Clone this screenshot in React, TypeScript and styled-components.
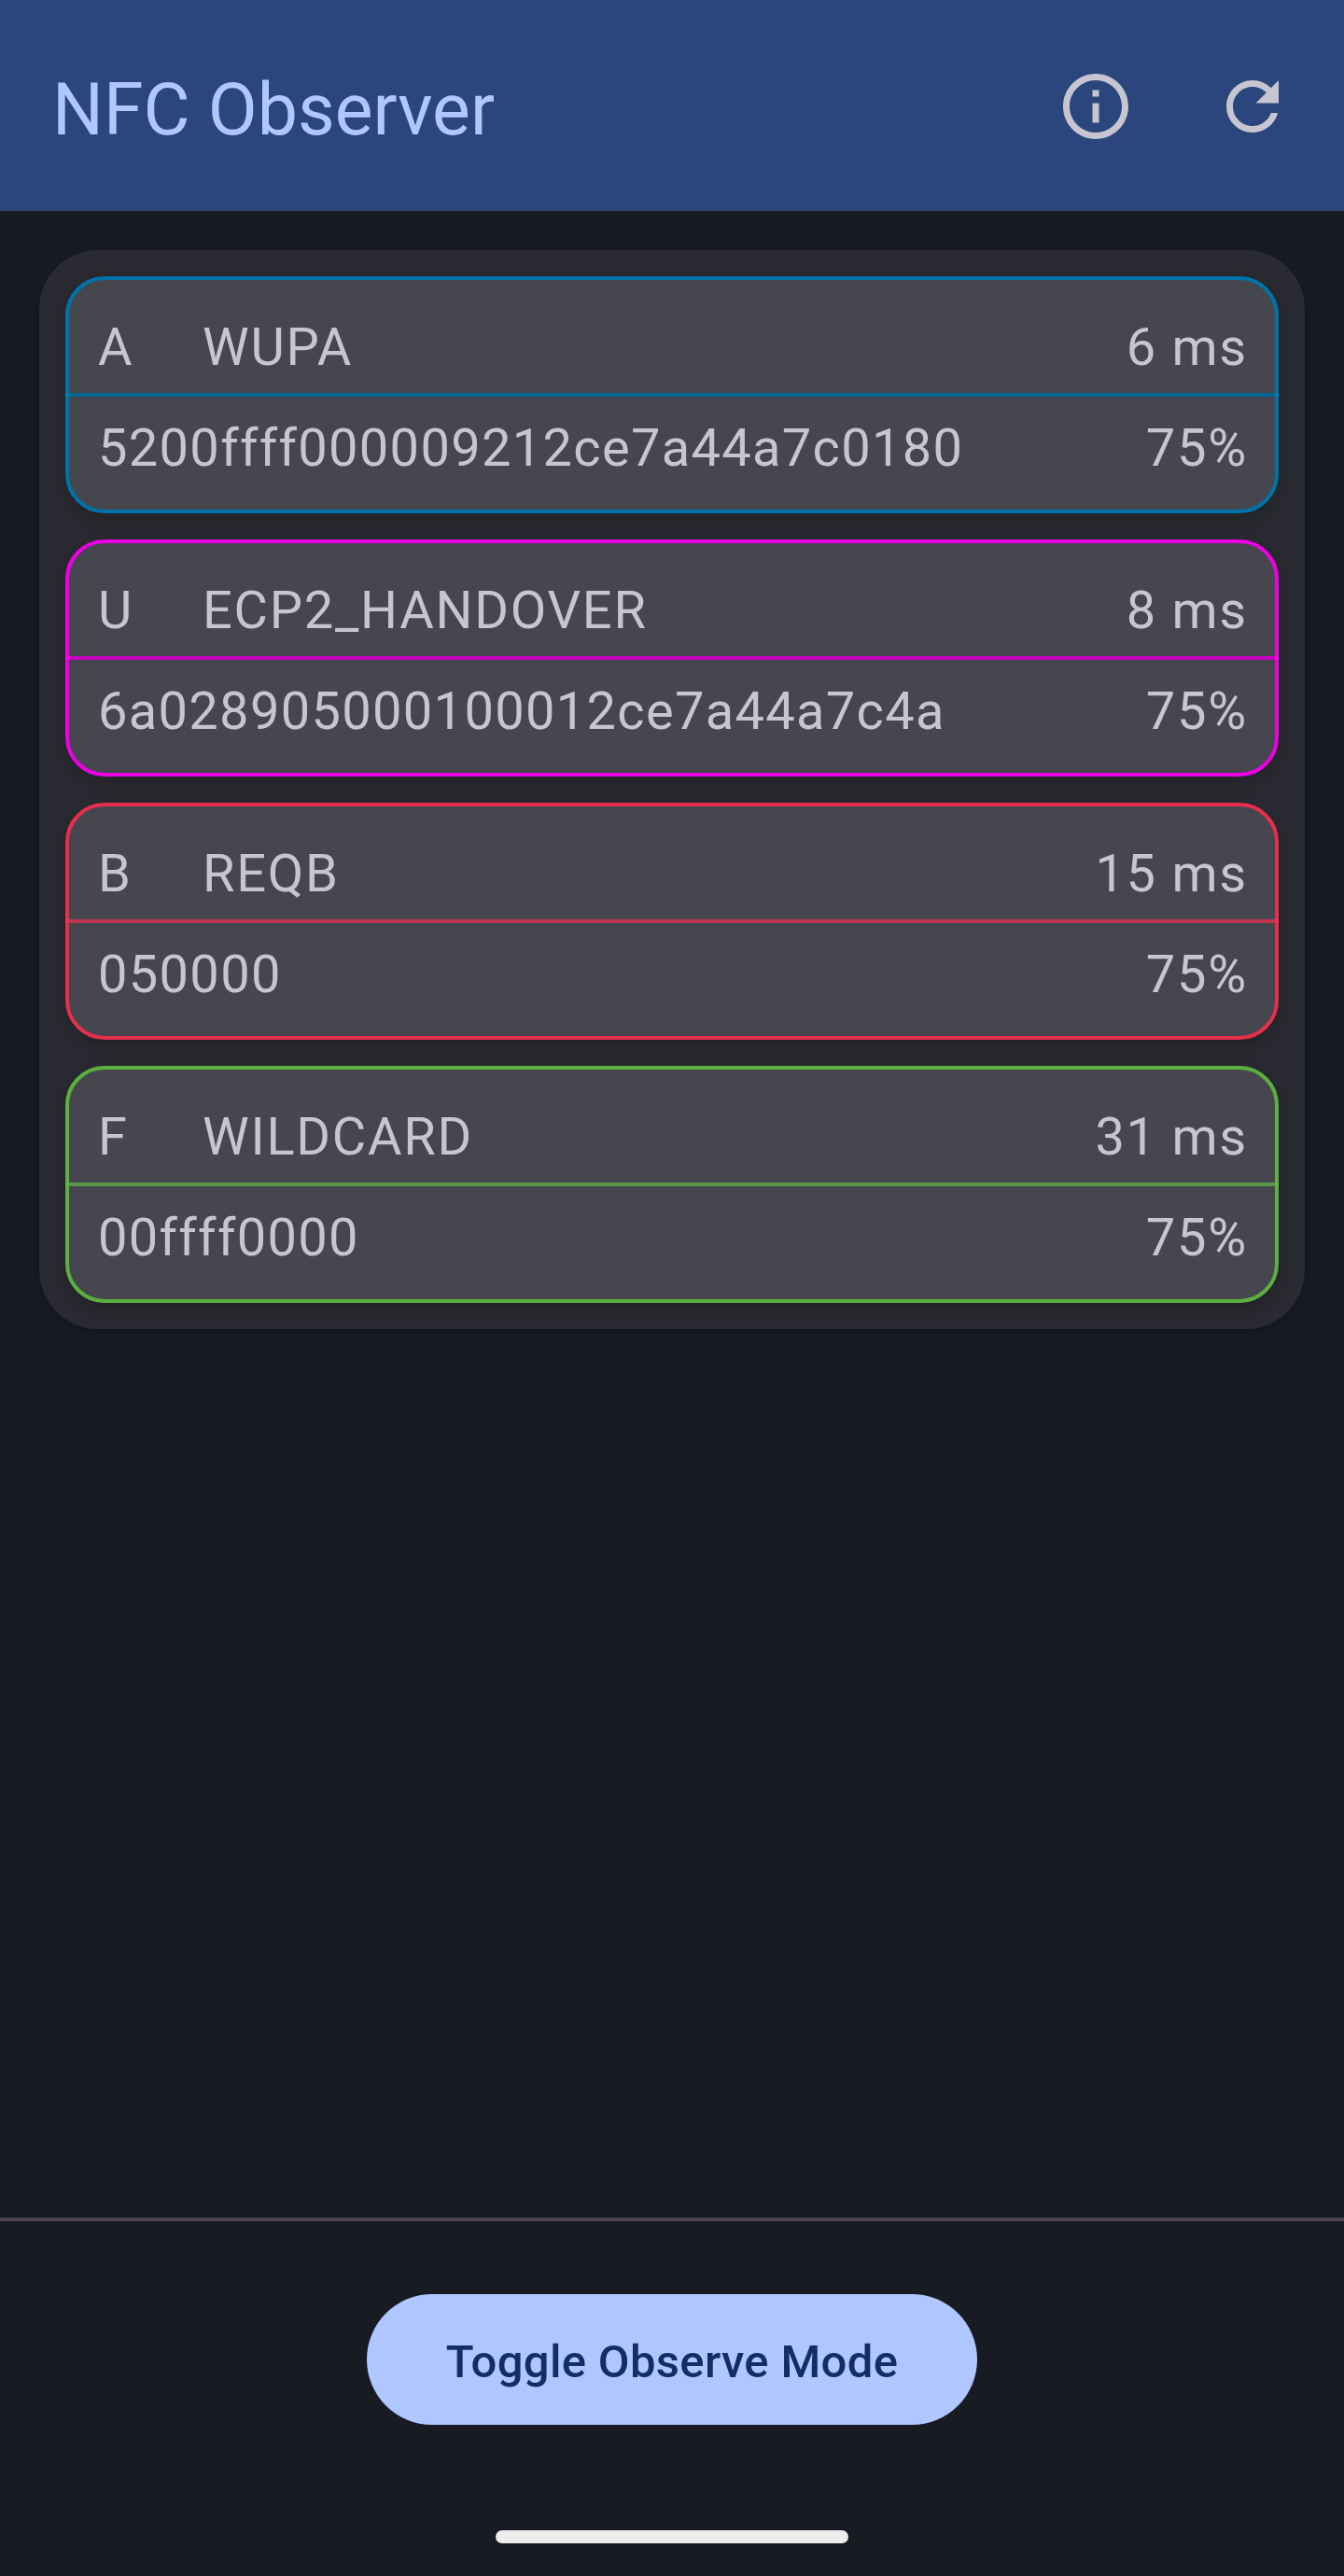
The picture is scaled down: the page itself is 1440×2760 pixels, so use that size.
import React from "react";
import styled, { createGlobalStyle } from "styled-components";

const GlobalStyle = createGlobalStyle`
  * { box-sizing: border-box; }
  body { margin: 0; background: #191b23; font-family: Roboto, "Noto Sans", sans-serif; }
`;

const Screen = styled.div`
  display: flex;
  flex-direction: column;
  height: 2760px;
  background: #191b23;
`;

const TopBar = styled.header`
  display: flex;
  align-items: center;
  justify-content: space-between;
  height: 226px;
  padding: 2px 14px 0 56px;
  background: #2b467c;
`;

const Title = styled.h1`
  margin: 8px 0 0;
  color: #b0c6ff;
  font-size: 77px;
  font-weight: 400;
  line-height: 98px;
`;

const Actions = styled.div`
  display: flex;
`;

const IconButton = styled.button`
  width: 168px;
  height: 168px;
  padding: 42px;
  border: 0;
  background: none;
  color: #c6c5d0;
  svg { display: block; width: 84px; height: 84px; fill: currentColor; }
`;

const Content = styled.main`
  flex: 1;
  padding: 42px;
`;

const Panel = styled.section`
  display: flex;
  flex-direction: column;
  gap: 28px;
  padding: 28px;
  border-radius: 63px;
  background: #2a2a32;
  box-shadow: 0 4px 10px rgba(0, 0, 0, 0.22);
`;

const Card = styled.article<{ $color: string }>`
  height: 254px;
  border: 4px solid ${(p) => p.$color};
  border-radius: 42px;
  background: #46464f;
  box-shadow: 0 6px 20px rgba(0, 0, 0, 0.22);
`;

const Row = styled.div`
  display: flex;
  height: 121px;
  padding: 30px 29px 0 31px;
  color: #c6c5d0;
  font-size: 56px;
  line-height: 84px;
  letter-spacing: 1.75px;
  white-space: nowrap;
`;

const DataRow = styled(Row)`
  padding-top: 13px;
`;

const Kind = styled.span`
  width: 112px;
`;

const Label = styled.span`
  flex: 1;
`;

const Payload = styled(Label)`
  letter-spacing: 1.31px;
`;

const Rule = styled.hr<{ $color: string; $cap: string }>`
  height: 4px;
  margin: 0 -4px;
  border: 0 solid ${(p) => p.$cap};
  border-width: 0 4px;
  background: ${(p) => p.$color};
`;

const BottomBar = styled.footer`
  display: flex;
  flex-direction: column;
  align-items: center;
  height: 384px;
  padding-top: 78px;
  border-top: 4px solid #4c444f;
`;

const ToggleButton = styled.button`
  width: 654px;
  height: 140px;
  padding: 5px 0 0;
  border: 0;
  border-radius: 70px;
  background: #b0c6ff;
  color: #122f65;
  font: 500 49px/70px Roboto, sans-serif;
  letter-spacing: 0.33px;
`;

const HomeHandle = styled.div`
  width: 378px;
  height: 14px;
  margin-top: 113px;
  border-radius: 7px;
  background: #ededed;
`;

const frames = [
  { kind: "A", name: "WUPA", delta: "6 ms", data: "5200ffff000009212ce7a44a7c0180", gain: "75%", color: "#0073a8", rule: "#006890", cap: "#007ab8" },
  { kind: "U", name: "ECP2_HANDOVER", delta: "8 ms", data: "6a028905000100012ce7a44a7c4a", gain: "75%", color: "#ee00e4", rule: "#c800bf", cap: "#ff00f8" },
  { kind: "B", name: "REQB", delta: "15 ms", data: "050000", gain: "75%", color: "#e62e4d", rule: "#be3650", cap: "#fa2c4e" },
  { kind: "F", name: "WILDCARD", delta: "31 ms", data: "00ffff0000", gain: "75%", color: "#5caf40", rule: "#589848", cap: "#5cbd38" },
];

export default function App() {
  return (
    <>
      <GlobalStyle />
      <Screen>
        <TopBar>
          <Title>NFC Observer</Title>
          <Actions>
            <IconButton aria-label="Info">
              <svg viewBox="0 0 24 24">
                <path d="M11 7h2v2h-2zm0 4h2v6h-2zm1-9C6.48 2 2 6.48 2 12s4.48 10 10 10 10-4.48 10-10S17.52 2 12 2zm0 18c-4.41 0-8-3.59-8-8s3.59-8 8-8 8 3.59 8 8-3.59 8-8 8z" />
              </svg>
            </IconButton>
            <IconButton aria-label="Refresh">
              <svg viewBox="0 0 24 24">
                <path d="M17.65 6.35C16.2 4.9 14.21 4 12 4c-4.42 0-7.99 3.58-7.99 8s3.57 8 7.99 8c3.73 0 6.84-2.55 7.73-6h-2.08c-.82 2.33-3.04 4-5.65 4-3.31 0-6-2.69-6-6s2.69-6 6-6c1.66 0 3.14.69 4.22 1.78L13 11h7V4l-2.35 2.35z" />
              </svg>
            </IconButton>
          </Actions>
        </TopBar>
        <Content>
          <Panel>
            {frames.map((f) => (
              <Card key={f.kind} $color={f.color}>
                <Row>
                  <Kind>{f.kind}</Kind>
                  <Label>{f.name}</Label>
                  <span>{f.delta}</span>
                </Row>
                <Rule $color={f.rule} $cap={f.cap} />
                <DataRow>
                  <Payload>{f.data}</Payload>
                  <span>{f.gain}</span>
                </DataRow>
              </Card>
            ))}
          </Panel>
        </Content>
        <BottomBar>
          <ToggleButton>Toggle Observe Mode</ToggleButton>
          <HomeHandle />
        </BottomBar>
      </Screen>
    </>
  );
}
